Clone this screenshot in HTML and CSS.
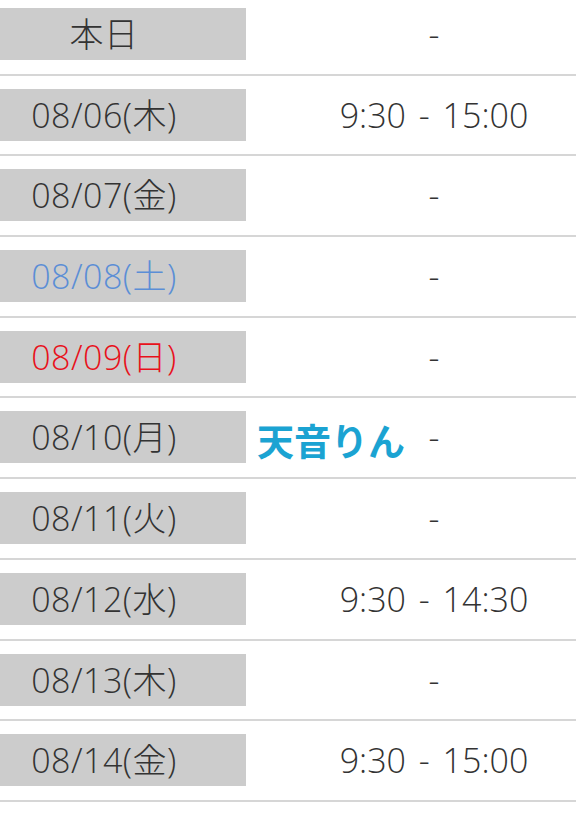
FILE: index.html
```html
<!DOCTYPE html>
<html lang="ja">
<head>
    <meta charset="UTF-8">
    <meta name="viewport" content="width=device-width, initial-scale=1.0">
    <title>出勤予定</title>
    <link rel="stylesheet" href="styles.css">
</head>
<body>

    <div class="schedule">
        <div class="row">
            <div class="day">本日</div>
            <div class="time">-</div>
        </div>
        <div class="row">
            <div class="day">08/06(木)</div>
            <div class="time">9:30 - 15:00</div>
        </div>
        <div class="row">
            <div class="day">08/07(金)</div>
            <div class="time">-</div>
        </div>
        <div class="row">
            <div class="day sat">08/08(土)</div>
            <div class="time">-</div>
        </div>
        <div class="row">
            <div class="day sun">08/09(日)</div>
            <div class="time">-</div>
        </div>
        <div class="row">
            <div class="day">08/10(月)</div>
            <div class="time">-</div>
            <span class="name">天音りん</span>
        </div>
        <div class="row">
            <div class="day">08/11(火)</div>
            <div class="time">-</div>
        </div>
        <div class="row">
            <div class="day">08/12(水)</div>
            <div class="time">9:30 - 14:30</div>
        </div>
        <div class="row">
            <div class="day">08/13(木)</div>
            <div class="time">-</div>
        </div>
        <div class="row">
            <div class="day">08/14(金)</div>
            <div class="time">9:30 - 15:00</div>
        </div>
    </div>

</body>
</html>
```

FILE: styles.css
```css
body {
    font-family: "Open Sans", "Noto Sans CJK JP", sans-serif;
    background-color: #ffffff;
    color: #333333;
    margin: 0;
    overflow: hidden;
}
.schedule {
    width: 576px;
}
.row {
    position: relative;
    display: flex;
    align-items: center;
    padding: 13px 0 13.7px;
    border-bottom: 2px solid #d6d6d6;
}
.row:first-child {
    padding-top: 8px;
}
.day {
    flex: none;
    width: 284px;
    height: 52px;
    margin-left: -38px;
    background: #cccccc;
    display: flex;
    align-items: center;
    justify-content: center;
    font-size: 34px;
    font-weight: 300;
    letter-spacing: 0.5px;
    line-height: 1;
}
.day.sat {
    color: #5b8ed6;
}
.day.sun {
    color: #e8111b;
}
.time {
    flex: 1;
    padding-left: 46px;
    text-align: center;
    font-size: 34px;
    font-weight: 300;
    word-spacing: 4px;
    line-height: 1;
}
.name {
    position: absolute;
    left: 257px;
    top: 24px;
    font-family: "Noto Sans CJK JP", sans-serif;
    font-size: 37px;
    line-height: 1;
    font-weight: bold;
    color: #1ba3d2;
}
```
